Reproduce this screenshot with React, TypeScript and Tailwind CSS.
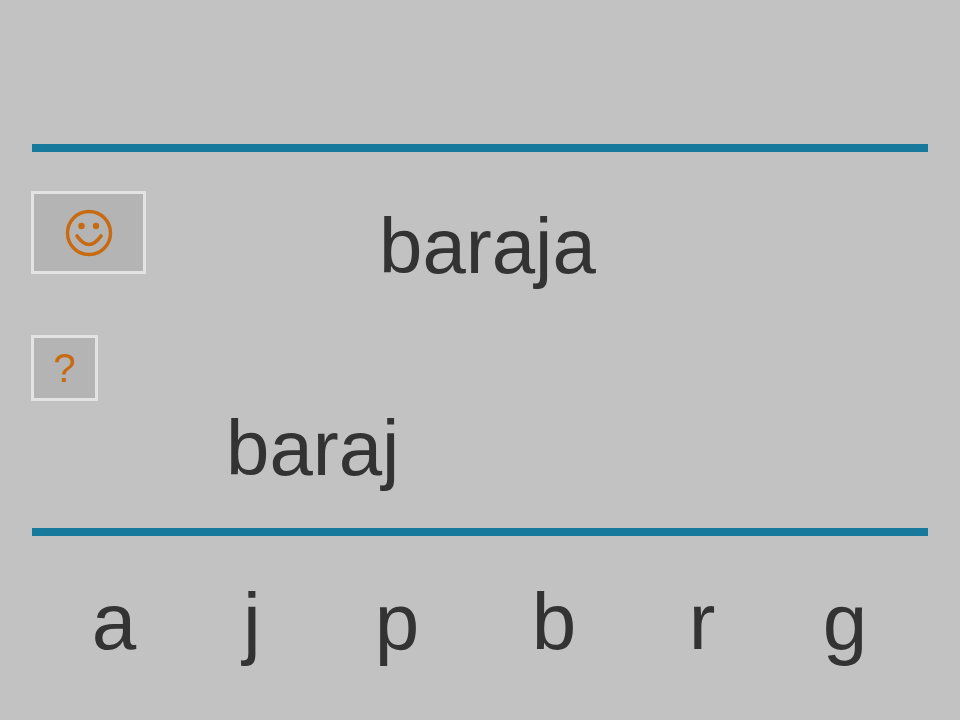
const letters = [
  { ch: 'a', ml: 'ml-[64px]' },
  { ch: 'j', ml: 'ml-[38px]' },
  { ch: 'p', ml: 'ml-[45px]' },
  { ch: 'b', ml: 'ml-[57px]' },
  { ch: 'r', ml: 'ml-[48px]' },
  { ch: 'g', ml: 'ml-[43px]' }
]

function Smiley() {
  return (
    <svg width="48" height="48" viewBox="0 0 48 48" fill="none">
      <circle cx="24" cy="24" r="21.5" stroke="#c86a10" strokeWidth="3.4" />
      <circle cx="16.5" cy="17" r="3.2" fill="#c86a10" />
      <circle cx="31" cy="17" r="3.2" fill="#c86a10" />
      <path d="M12 27 Q24 44 36 27" stroke="#c86a10" strokeWidth="3.6" strokeLinecap="round" />
    </svg>
  )
}

export default function App() {
  return (
    <div
      className="w-[960px] h-[720px] overflow-hidden bg-[#c2c2c2] text-[#333333]"
      style={{ fontFamily: '"Liberation Sans", Arial, sans-serif' }}
    >
      <div className="h-[144px]" />
      <div className="mx-[32px] h-[8px] bg-[#17799b]" />

      <div className="flex items-start">
        <div className="ml-[31px] mt-[39px] flex h-[83px] w-[115px] items-center justify-center border-[3px] border-[#e3e3e3] bg-[#b4b4b4]">
          <Smiley />
        </div>
        <div className="ml-[233px] mt-[54px] text-[78px] leading-[80px]">baraja</div>
      </div>

      <div className="ml-[31px] mt-[49px] flex h-[66px] w-[67px] items-center justify-center border-[3px] border-[#e3e3e3] bg-[#b4b4b4]">
        <span className="text-[40px] leading-none text-[#c86a10]">?</span>
      </div>
      <div className="ml-[226px] mt-[7px] text-[78px] leading-[80px]">baraj</div>

      <div className="mx-[32px] mt-[40px] h-[8px] bg-[#17799b]" />

      <div className="mt-[46px] flex text-[80px] leading-[80px]">
        {letters.map((l) => (
          <span key={l.ch} className={`${l.ml} w-[100px] text-center`}>
            {l.ch}
          </span>
        ))}
      </div>
    </div>
  )
}
